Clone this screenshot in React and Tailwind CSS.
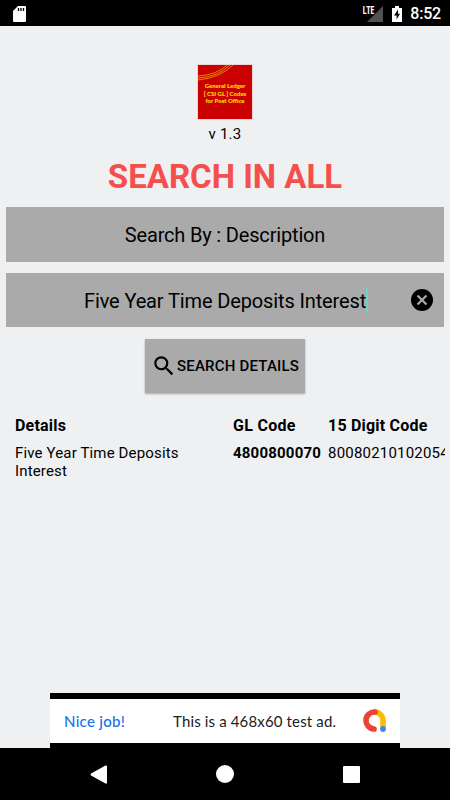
function StatusBar() {
  return (
    <header className="flex h-[26px] shrink-0 items-center bg-black pt-px pr-[9px] pl-[13px] text-white">
      <svg width="13" height="16" viewBox="0 0 13 16">
        <path d="M5 0H12Q13 0 13 1V15Q13 16 12 16H1Q0 16 0 15V5Z" fill="white" />
        <path d="M5.5 2V5M8 2V5M10.5 2V5" stroke="black" strokeWidth="1.3" />
      </svg>
      <div className="ml-auto flex items-center">
        <span className="mr-[-7px] mb-[9px] origin-right scale-x-[0.68] font-['Open_Sans'] text-[11px] leading-[9px] font-bold tracking-[-0.6px]">LTE</span>
        <svg className="mr-[9px]" width="16" height="16" viewBox="0 0 16 16">
          <path d="M16 0V16H0Z" fill="#505050" />
        </svg>
        <svg className="mr-[8px]" width="10" height="16" viewBox="0 0 10 16">
          <path d="M3 0H7V2H10V16H0V2H3Z" fill="white" />
          <path d="M6 3.5L2 9.5H4.6V13.5L8 7.7H6Z" fill="black" />
        </svg>
        <span className="text-[16px] leading-[20px] font-medium tracking-[-0.2px]">8:52</span>
      </div>
    </header>
  );
}

function Logo() {
  return (
    <div className="relative h-[54px] w-[54px] bg-[#cb0000] outline outline-[#e9d4d6]">
      <svg className="absolute inset-0" width="54" height="54" viewBox="0 0 54 54" fill="none" stroke="#df8500" strokeWidth="1">
        <path d="M0 11Q19 10 29 0M0 13Q20 12 32 0M0 15Q22 13 35 0" />
      </svg>
      <div className="relative pt-[17px] text-center font-['Lato'] text-[6px] leading-[7.7px] font-black whitespace-nowrap text-[#ffe000]">
        <div>General Ledger</div>
        <div>[ CSI GL ] Codes</div>
        <div>for Post Office</div>
      </div>
    </div>
  );
}

function AdBanner() {
  return (
    <div className="mx-[50px] mt-auto h-[55px] bg-black pt-[6px]">
      <div className="flex h-[44px] items-center bg-white pr-[14px] pl-[14px]">
        <span className="w-[109px] font-['Lato'] text-[15px] font-medium tracking-[0.3px] text-[#1473eb]">Nice job!</span>
        <span className="font-['Lato'] text-[15px] tracking-[0.15px] whitespace-nowrap text-[#202124]">This is a 468x60 test ad.</span>
        <svg className="mb-px ml-auto" width="23" height="23" viewBox="0 0 23 23" fill="none" strokeWidth="5.6" strokeLinecap="round">
          <path d="M11.5 3A8.5 8.5 0 0 1 20 11.5V18.5" stroke="#fbbc04" />
          <path d="M12 3A8.5 8.5 0 1 0 11 20" stroke="#ea4335" />
          <circle cx="20" cy="20" r="2.9" fill="#4285f4" />
        </svg>
      </div>
    </div>
  );
}

export default function App() {
  return (
    <div className="flex h-[800px] w-[450px] flex-col overflow-hidden bg-[#eff0f2] font-['Roboto',sans-serif] text-black">
      <StatusBar />
      <main className="flex min-h-0 flex-1 flex-col">
        <div className="flex flex-col items-center pt-[39px]">
          <Logo />
          <div className="mt-[6px] text-[15px] leading-[18px] tracking-[0.2px]">v 1.3</div>
          <h1 className="mt-[14px] h-[50px] text-[33px] leading-[40px] font-bold whitespace-nowrap text-[#f44f4c]">SEARCH IN ALL</h1>
        </div>
        <div className="mx-[6px] flex h-[55px] items-center justify-center bg-[#aaaaaa] pt-px text-[20px] tracking-[-0.17px]">
          Search By : Description
        </div>
        <div className="mx-[6px] mt-[11px] flex h-[54px] items-center bg-[#aaaaaa] pr-[11px] pl-[78px]">
          <span className="pt-[2px] text-[20px] tracking-[-0.13px] whitespace-nowrap">Five Year Time Deposits Interest</span>
          <span className="h-[26px] w-[2px] bg-[#72cfc4]" />
          <svg className="ml-auto" width="22" height="22" viewBox="0 0 22 22">
            <circle cx="11" cy="11" r="11" fill="black" />
            <path d="M6.5 6.5L15.5 15.5M15.5 6.5L6.5 15.5" stroke="#aaaaaa" strokeWidth="2.2" />
          </svg>
        </div>
        <button className="mt-[12px] ml-[145px] flex h-[54px] w-[160px] items-center bg-[#aaaaaa] pl-[6px] text-[15px] font-medium tracking-[0.2px] whitespace-nowrap shadow-[0_1px_2px_#00000050]">
          <svg width="26" height="26" viewBox="0 0 24 24">
            <path d="M15.5 14h-.79l-.28-.27A6.47 6.47 0 0 0 16 9.5 6.5 6.5 0 1 0 9.5 16c1.61 0 3.09-.59 4.23-1.57l.27.28v.79l5 4.99L20.49 19zM9.5 14a4.5 4.5 0 1 1 0-9 4.5 4.5 0 0 1 0 9z" />
          </svg>
          <span>SEARCH DETAILS</span>
        </button>
        <div className="mt-[22px] mr-[5px] ml-[15px] grid grid-cols-[218px_95px_1fr] overflow-hidden text-[15px] leading-[18px]">
          <div className="pt-px text-[16px] leading-[20px] font-bold tracking-[0.2px]">Details</div>
          <div className="pt-px text-[16px] leading-[20px] font-bold tracking-[0.3px]">GL Code</div>
          <div className="pt-px text-[16px] leading-[20px] font-bold tracking-[0.2px] whitespace-nowrap">15 Digit Code</div>
          <div className="mt-[8px] w-[190px] tracking-[0.15px]">Five Year Time Deposits Interest</div>
          <div className="mt-[8px] font-bold tracking-[0.2px]">4800800070</div>
          <div className="mt-[8px] overflow-hidden tracking-[0.2px] whitespace-nowrap">800802101020541</div>
        </div>
        <AdBanner />
      </main>
      <nav className="flex h-[52px] shrink-0 items-center bg-black pr-[90px] pl-[90px]">
        <svg width="17" height="19" viewBox="0 0 17 19" fill="white">
          <path d="M15.5 .5Q17 0 17 1.5V17.5Q17 19 15.5 18.5L1 10.5Q0 9.5 1 8.5Z" />
        </svg>
        <span className="ml-[109px] h-[18px] w-[18px] rounded-full bg-white" />
        <span className="ml-auto h-[17px] w-[17px] rounded-[1px] bg-white" />
      </nav>
    </div>
  );
}
